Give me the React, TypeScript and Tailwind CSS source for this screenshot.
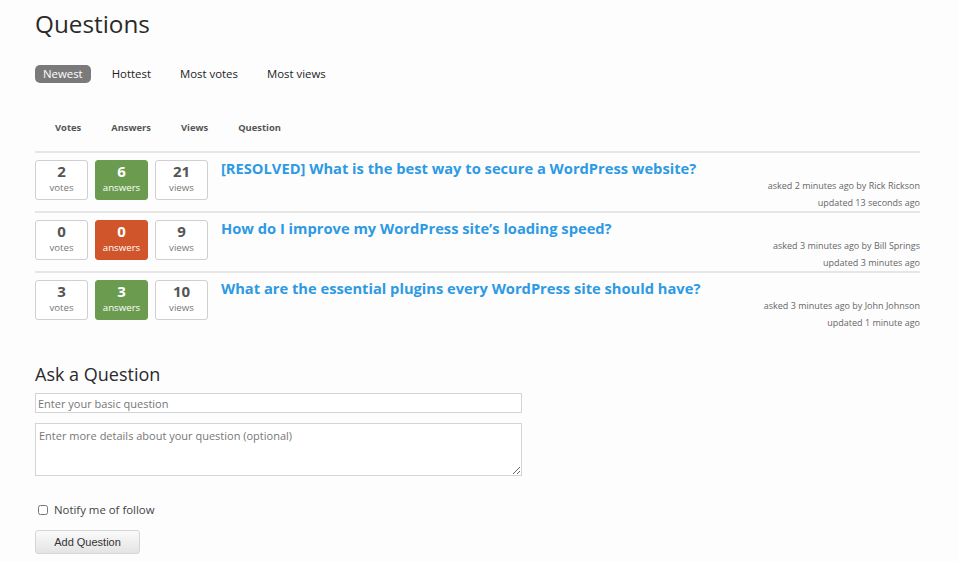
import { useState } from 'react';

type Question = {
  votes: number;
  answers: number;
  views: number;
  title: string;
  asked: string;
  author: string;
  updated: string;
};

const QUESTIONS: Question[] = [
  {
    votes: 2,
    answers: 6,
    views: 21,
    title: '[RESOLVED] What is the best way to secure a WordPress website?',
    asked: '2 minutes ago',
    author: 'Rick Rickson',
    updated: '13 seconds ago',
  },
  {
    votes: 0,
    answers: 0,
    views: 9,
    title: 'How do I improve my WordPress site\u2019s loading speed?',
    asked: '3 minutes ago',
    author: 'Bill Springs',
    updated: '3 minutes ago',
  },
  {
    votes: 3,
    answers: 3,
    views: 10,
    title: 'What are the essential plugins every WordPress site should have?',
    asked: '3 minutes ago',
    author: 'John Johnson',
    updated: '1 minute ago',
  },
];

const TABS = ['Newest', 'Hottest', 'Most votes', 'Most views'];

function StatBox({ value, label, tone }: { value: number; label: string; tone?: 'green' | 'red' }) {
  const cls =
    tone === 'green'
      ? 'bg-[#6b9b4f] border-[#6b9b4f] text-white'
      : tone === 'red'
        ? 'bg-[#d0552b] border-[#d0552b] text-white'
        : 'bg-white border-[#cfcfcf] text-[#555]';
  return (
    <div className={`w-[53px] h-[40px] border rounded-[3px] flex flex-col items-center pt-[2px] ${cls}`}>
      <span className="text-[15px] font-bold leading-[16px]">{value}</span>
      <span className={`mt-[3px] text-[9.7px] leading-[12px] ${tone ? '' : 'text-[#777]'}`}>{label}</span>
    </div>
  );
}

export default function App() {
  const [tab, setTab] = useState('Newest');
  const [notify, setNotify] = useState(false);

  return (
    <div className="min-h-[562px] bg-[#fdfdfe] font-['Open_Sans',sans-serif] text-[#333]">
      <div className="w-[885px] ml-[35px] pt-[9px]">
        <h1 className="text-[24.3px] leading-[30px] font-normal text-[#2a2a2a]">Questions</h1>

        <div className="flex gap-[13px] mt-[26px]">
          {TABS.map((t) => (
            <button
              key={t}
              type="button"
              onClick={() => setTab(t)}
              className={`px-2 h-[18px] rounded-[5px] text-[11.4px] leading-[18px] ${
                t === tab ? 'bg-[#7a7a7a] text-white' : 'text-[#222]'
              }`}
            >
              {t}
            </button>
          ))}
        </div>

        <div className="flex gap-[30px] pl-[20px] mt-[38px] text-[9.4px] font-bold text-[#555] leading-[14px]">
          <span>Votes</span>
          <span>Answers</span>
          <span>Views</span>
          <span>Question</span>
        </div>

        <div className="mt-[16px] border-t-2 border-[#e6e6e6]">
          {QUESTIONS.map((q) => (
            <div key={q.title} className="flex pt-[6px] border-b-2 border-[#e6e6e6] last:border-b-0">
              <div className="flex gap-[7px] mt-[1px]">
                <StatBox value={q.votes} label="votes" />
                <StatBox value={q.answers} label="answers" tone={q.answers > 0 ? 'green' : 'red'} />
                <StatBox value={q.views} label="views" />
              </div>
              <div className="flex-1 ml-[13px]">
                <a href="#" className="block text-[14.7px] font-bold leading-[18px] text-[#2d9ae3]">
                  {q.title}
                </a>
                <div className="text-right text-[9px] leading-[17px] text-[#666]">
                  <div>
                    asked {q.asked} by {q.author}
                  </div>
                  <div>updated {q.updated}</div>
                </div>
              </div>
            </div>
          ))}
        </div>

        <h2 className="text-[18px] leading-[24px] font-normal text-[#2a2a2a] mt-[31px]">Ask a Question</h2>
        <div className="w-[487px] mt-[7px] flex flex-col gap-[10px]">
          <input
            type="text"
            placeholder="Enter your basic question"
            className="h-[20px] w-full border border-[#d4d4d4] bg-white px-[2px] text-[11px] placeholder:text-[#777] outline-none"
          />
          <textarea
            placeholder="Enter more details about your question (optional)"
            className="h-[53px] w-full border border-[#d4d4d4] bg-white px-[3px] pt-[4px] text-[11px] leading-[15px] placeholder:text-[#777] outline-none"
          />
        </div>

        <label className="flex items-center gap-[6px] mt-[26px] ml-[3px] text-[11.4px] text-[#444] leading-[16px]">
          <input
            type="checkbox"
            checked={notify}
            onChange={(e) => setNotify(e.target.checked)}
            className="w-[10px] h-[10px] m-0"
          />
          Notify me of follow
        </label>

        <button
          type="button"
          className="mt-[12px] w-[105px] h-[24px] rounded-[3px] border border-[#d6d6d6] bg-gradient-to-b from-[#fafafa] to-[#e4e4e4] font-['Liberation_Sans',Arial,sans-serif] text-[11px] text-[#333]"
        >
          Add Question
        </button>
      </div>
    </div>
  );
}
